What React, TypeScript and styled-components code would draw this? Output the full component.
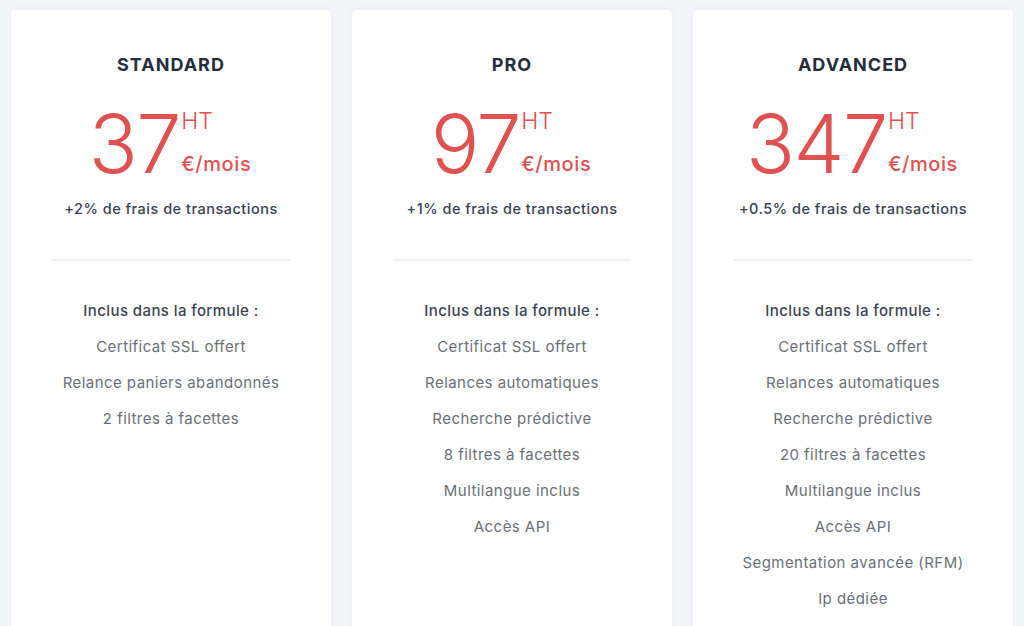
import React from 'react';
import styled, { createGlobalStyle } from 'styled-components';

const GlobalStyle = createGlobalStyle`
  html, body {
    margin: 0;
    padding: 0;
    background: #f3f5f9;
    font-family: Inter, 'Open Sans', sans-serif;
  }
`;

type Plan = {
  name: string;
  price: string;
  fees: string;
  features: string[];
};

const plans: Plan[] = [
  {
    name: 'STANDARD',
    price: '37',
    fees: '+2% de frais de transactions',
    features: ['Certificat SSL offert', 'Relance paniers abandonnés', '2 filtres à facettes'],
  },
  {
    name: 'PRO',
    price: '97',
    fees: '+1% de frais de transactions',
    features: [
      'Certificat SSL offert',
      'Relances automatiques',
      'Recherche prédictive',
      '8 filtres à facettes',
      'Multilangue inclus',
      'Accès API',
    ],
  },
  {
    name: 'ADVANCED',
    price: '347',
    fees: '+0.5% de frais de transactions',
    features: [
      'Certificat SSL offert',
      'Relances automatiques',
      'Recherche prédictive',
      '20 filtres à facettes',
      'Multilangue inclus',
      'Accès API',
      'Segmentation avancée (RFM)',
      'Ip dédiée',
    ],
  },
];

const App = () => (
  <>
    <GlobalStyle />
    <Page>
      {plans.map((plan) => (
        <Card key={plan.name}>
          <Title>{plan.name}</Title>
          <PriceRow>
            <Amount>{plan.price}</Amount>
            <PriceSide>
              <Tax>HT</Tax>
              <Period>€/mois</Period>
            </PriceSide>
          </PriceRow>
          <Fees>{plan.fees}</Fees>
          <Divider />
          <Included>Inclus dans la formule :</Included>
          <FeatureList>
            {plan.features.map((f) => (
              <Feature key={f}>{f}</Feature>
            ))}
          </FeatureList>
        </Card>
      ))}
    </Page>
  </>
);

export default App;

const Page = styled.div`
  display: grid;
  grid-template-columns: repeat(3, 320px);
  column-gap: 21px;
  padding: 10px 0 0 11px;
  height: 626px;
  box-sizing: border-box;
  overflow: hidden;
`;

const Card = styled.div`
  background: #ffffff;
  border-radius: 4px;
  box-shadow: 0 0 6px rgba(30, 45, 80, 0.06);
  display: flex;
  flex-direction: column;
  align-items: center;
  padding: 44px 41px 40px;
  min-height: 700px;
`;

const Title = styled.h2`
  margin: 0;
  font-size: 18px;
  line-height: 22px;
  font-weight: 700;
  color: #252d3d;
  letter-spacing: 1px;
`;

const PriceRow = styled.div`
  display: flex;
  align-items: stretch;
  margin-top: 32px;
  margin-left: -2px;
  color: #e05252;
`;

const Amount = styled.span`
  font-size: 81px;
  font-weight: 300;
  line-height: 72px;
  letter-spacing: -1.5px;
`;

const PriceSide = styled.div`
  display: flex;
  flex-direction: column;
  justify-content: space-between;
  margin-left: 1px;
  padding: 2px 0 6px;
`;

const Tax = styled.span`
  font-size: 23px;
  font-weight: 300;
  line-height: 22px;
`;

const Period = styled.span`
  font-size: 20px;
  font-weight: 500;
  line-height: 20px;
  letter-spacing: 0.6px;
`;

const Fees = styled.p`
  margin: 20px 0 0;
  font-size: 14.5px;
  font-weight: 500;
  color: #3a4150;
  letter-spacing: 0.5px;
`;

const Divider = styled.hr`
  align-self: stretch;
  border: none;
  border-top: 2px solid #eef0f3;
  margin: 42px 0 0;
`;

const Included = styled.p`
  margin: 40px 0 0;
  font-size: 15px;
  font-weight: 500;
  color: #3d4352;
  letter-spacing: 0.4px;
`;

const FeatureList = styled.ul`
  list-style: none;
  margin: 0;
  padding: 0;
  text-align: center;
`;

const Feature = styled.li`
  margin-top: 18px;
  font-size: 15px;
  line-height: 18px;
  color: #6b6f78;
  letter-spacing: 0.45px;
`;
